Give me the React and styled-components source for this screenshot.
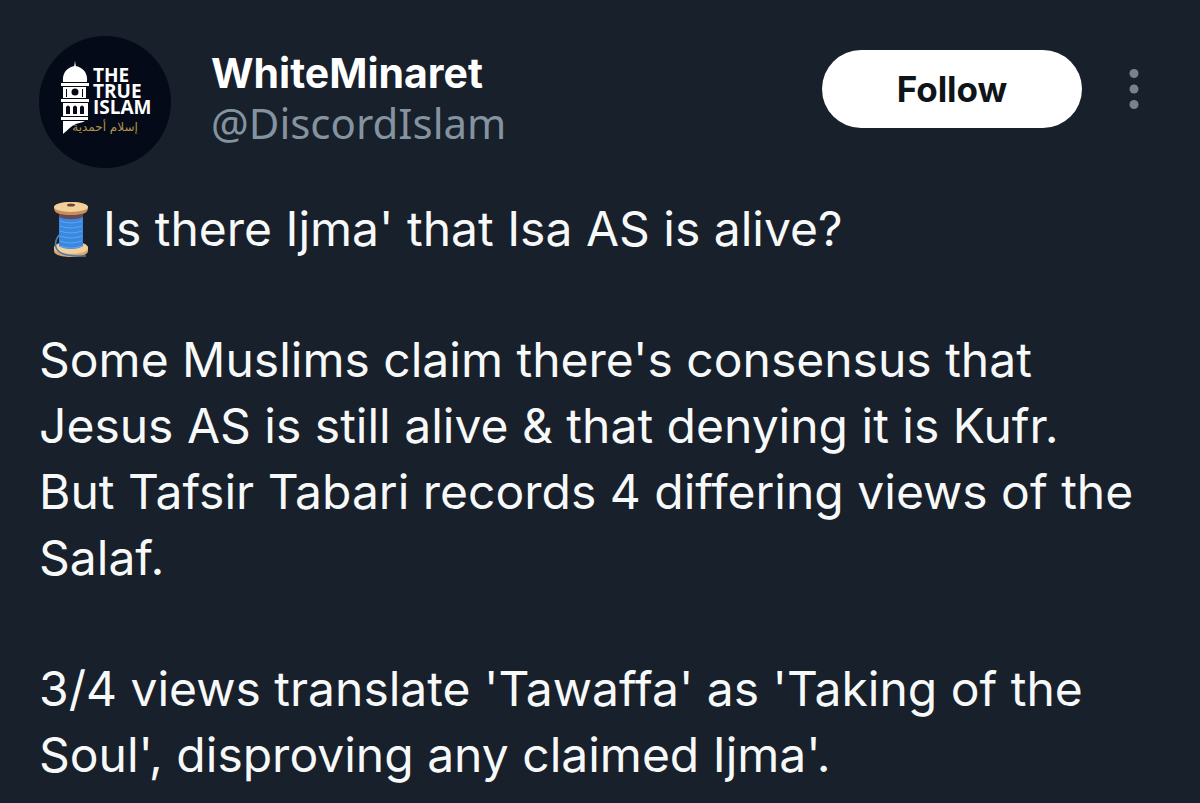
import React from 'react';
import styled, { createGlobalStyle } from 'styled-components';

const GlobalStyle = createGlobalStyle`
  * {
    box-sizing: border-box;
  }

  body {
    margin: 0;
    background-color: #18202b;
    font-family: Inter, 'Noto Sans', sans-serif;
  }
`;

const Post = styled.article`
  padding: 36px 40px 12px 39px;
`;

const Header = styled.header`
  display: flex;
  align-items: flex-start;
  margin-right: 6px;
`;

const Avatar = styled.svg`
  flex: none;
  width: 132px;
  height: 132px;
`;

const Names = styled.div`
  flex: 1;
  min-width: 0;
  padding: 12px 0 0 40px;
`;

const DisplayName = styled.div`
  font-size: 41px;
  line-height: 50px;
  font-weight: 700;
  color: #ffffff;
`;

const Handle = styled.div`
  font-family: 'Noto Sans', sans-serif;
  font-size: 42px;
  line-height: 50px;
  color: #8493a0;
`;

const Actions = styled.div`
  display: flex;
  align-items: center;
  gap: 32px;
  padding-top: 14px;
`;

const FollowButton = styled.button`
  width: 260px;
  height: 78px;
  padding: 0;
  border: none;
  border-radius: 39px;
  background-color: #ffffff;
  color: #0f1419;
  font-family: inherit;
  font-size: 35px;
  font-weight: 700;
  line-height: 50px;
`;

const MoreButton = styled.button`
  display: flex;
  justify-content: center;
  width: 40px;
  height: 48px;
  padding: 0;
  border: none;
  background: none;
  color: #78828c;
`;

const Body = styled.div`
  margin-top: 28px;
  font-size: 48px;
  line-height: 66px;
  color: #f7f9f9;
`;

const Paragraph = styled.p`
  margin: 0 0 65px;

  &:last-child {
    margin-bottom: 0;
  }
`;

const Spool = styled.svg`
  width: 64px;
  height: 60px;
  vertical-align: -14px;
`;

const AvatarImage = () => (
    <Avatar viewBox="0 0 132 132" role="img" aria-label="The True Islam">
        <circle cx="66" cy="66" r="66" fill="#050a18"/>
        <g fill="#ffffff">
            <path d="M36 25l1 6h-2z"/>
            <path d="M24 46c-1-9 4-15 12-16 8 1 13 7 12 16z"/>
            <path d="M22 47h28v3h-28z"/>
            <path d="M24 51h23v11h-23z"/>
            <path d="M22 63h28v3h-28z"/>
            <path d="M24 67h25v13h-25z"/>
            <path d="M22 81h27v3h-27z"/>
            <path d="M24 85h22c-3 2-8 2-11 4-4 2-6 5-11 9z"/>
        </g>
        <g fill="#050a18">
            <circle cx="36" cy="56" r="3.5"/>
            <path d="M27 53h1v8h-1zM43 53h1v8h-1z"/>
            <path d="M27 78v-7q2-3 4 0v7zM34 78v-7q2-3 4 0v7zM41 78v-7q2-3 4 0v7z"/>
        </g>
        <g fill="#ffffff" fontFamily="'Open Sans', sans-serif" fontWeight="700" fontSize="19">
            <text x="54" y="46">THE</text>
            <text x="54" y="62">TRUE</text>
            <text x="54" y="78">ISLAM</text>
        </g>
        <text x="66" y="95" fill="#b3954a" fontFamily="'DejaVu Sans', sans-serif" fontSize="12" textAnchor="middle" direction="rtl">إسلام أحمدية</text>
    </Avatar>
);

const SpoolIcon = () => (
    <Spool viewBox="0 0 64 60" role="img" aria-label="Thread">
        <path d="M15 48c0-4 5-6 17-6s17 2 17 6v3c0 4-8 6-17 6s-17-2-17-6z" fill="#dba66b"/>
        <ellipse cx="32" cy="48" rx="17" ry="6" fill="#f3cf9c"/>
        <path d="M20 13h24v33c-5 4-19 4-24 0z" fill="#3b88e0"/>
        <path d="M20 13h24v4c-6 3-18 3-24 0z" fill="#6b4a58"/>
        <path d="M21 21q11 4 22 0M21 26q11 4 22 0M21 31q11 4 22 0M21 36q11 4 22 0M21 41q11 4 22 0M21 46q11 4 22 0" fill="none" stroke="#5aa5f2" strokeWidth="1.2"/>
        <path d="M15 8c0-4 7-6 17-6s17 2 17 6c0 5-5 7-17 7s-17-2-17-7z" fill="#c98f58"/>
        <ellipse cx="32" cy="7" rx="17" ry="5" fill="#f3cf9c"/>
        <ellipse cx="32" cy="5" rx="4" ry="1.5" fill="#6a4630"/>
        <path d="M20 35c-5 7-5 14 2 18 8 4 16 3 25 3" fill="none" stroke="#4c7ea8" strokeWidth="1.5"/>
    </Spool>
);

const App = () => {
    return (
        <>
            <GlobalStyle/>
            <Post>
                <Header>
                    <AvatarImage/>
                    <Names>
                        <DisplayName>WhiteMinaret</DisplayName>
                        <Handle>@DiscordIslam</Handle>
                    </Names>
                    <Actions>
                        <FollowButton type="button">Follow</FollowButton>
                        <MoreButton type="button" aria-label="More">
                            <svg width="12" height="48" viewBox="0 0 12 48" fill="currentColor">
                                <circle cx="6" cy="8.5" r="4.5"/>
                                <circle cx="6" cy="24" r="4.5"/>
                                <circle cx="6" cy="39.5" r="4.5"/>
                            </svg>
                        </MoreButton>
                    </Actions>
                </Header>
                <Body>
                    <Paragraph>
                        <SpoolIcon/>Is there Ijma' that Isa AS is alive?
                    </Paragraph>
                    <Paragraph>
                        Some Muslims claim there's consensus that
                        <br/>Jesus AS is still alive &amp; that denying it is Kufr.
                        <br/>But Tafsir Tabari records 4 differing views of the
                        <br/>Salaf.
                    </Paragraph>
                    <Paragraph>
                        3/4 views translate 'Tawaffa' as 'Taking of the
                        <br/>Soul', disproving any claimed Ijma'.
                    </Paragraph>
                </Body>
            </Post>
        </>
    )
}

export default App;
